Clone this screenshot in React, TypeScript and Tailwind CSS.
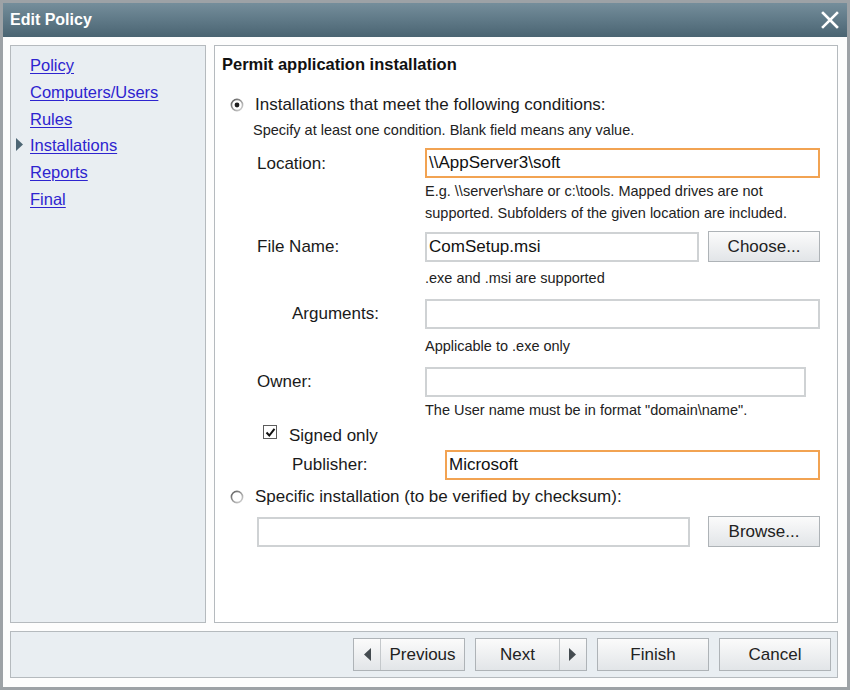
import React from "react";

const font = { fontFamily: '"Liberation Sans", Arial, sans-serif' };

function Radio({ checked }: { checked?: boolean }) {
  return (
    <svg width="14" height="14" viewBox="0 0 14 14" className="shrink-0">
      <defs>
        <linearGradient id={checked ? "rg1" : "rg2"} x1="0" y1="0" x2="1" y2="1">
          <stop offset="0" stopColor="#5a5a5a" />
          <stop offset="1" stopColor="#d8d8d8" />
        </linearGradient>
      </defs>
      <circle cx="7" cy="7" r="5.6" fill="#fff" stroke={`url(#${checked ? "rg1" : "rg2"})`} strokeWidth="1.6" />
      {checked && <circle cx="7" cy="7" r="2.4" fill="#1e1e1e" />}
    </svg>
  );
}

function Input({ value, orange, className }: { value?: string; orange?: boolean; className: string }) {
  return (
    <div
      className={`h-[30px] border-2 bg-white px-[2px] flex items-center text-[17px] text-[#111] ${
        orange ? "border-[#f2a352]" : "border-[#cfd2d4]"
      } ${className}`}
    >
      {value}
    </div>
  );
}

function Btn({ children, className }: { children: React.ReactNode; className?: string }) {
  return (
    <div
      className={`h-[31px] w-[112px] flex items-center justify-center border border-[#aeb3b7] bg-gradient-to-b from-[#fbfbfb] to-[#e2e5e8] text-[17px] text-[#222] ${className ?? ""}`}
    >
      {children}
    </div>
  );
}

const navItems = ["Policy", "Computers/Users", "Rules", "Installations", "Reports", "Final"];

export default function App() {
  return (
    <div style={font} className="w-[850px] h-[690px] border-[3px] border-[#9da2a6] flex flex-col bg-white">
      {/* title bar */}
      <div className="h-[34px] shrink-0 flex items-center justify-between pl-[7px] pr-[8px] bg-gradient-to-b from-[#758e9b] via-[#5f7987] to-[#4a6472]">
        <span className="text-white font-bold text-[16px]">Edit Policy</span>
        <svg width="18" height="18" viewBox="0 0 18 18">
          <path d="M2 2 L16 16 M16 2 L2 16" stroke="#fff" strokeWidth="2.6" strokeLinecap="square" />
        </svg>
      </div>

      <div className="flex-1 flex flex-col pl-[7px] pr-[9px] pt-[8px] pb-[9px] gap-[8px] bg-[#fdfdfd]">
        <div className="flex gap-[8px] h-[578px]">
          {/* left nav */}
          <div className="w-[196px] border border-[#b5babe] bg-[#e9eef2] pt-[6px]">
            {navItems.map((item) => (
              <div key={item} className="h-[26.8px] flex items-center relative pl-[19px]">
                {item === "Installations" && (
                  <svg width="8" height="13" viewBox="0 0 8 13" className="absolute left-[5px] top-[6px]">
                    <path d="M0 0 L7 6.5 L0 13 Z" fill="#4d6674" />
                  </svg>
                )}
                <span className="text-[16.5px] text-[#2e24cf] underline underline-offset-2">{item}</span>
              </div>
            ))}
          </div>

          {/* right content */}
          <div className="flex-1 border border-[#b5babe] bg-white pl-[7px] flex flex-col">
            <div className="mt-[8px] h-[20px] leading-[20px] font-bold text-[16.5px] text-[#111]">
              Permit application installation
            </div>

            <div className="mt-[20px] h-[22px] flex items-center text-[17px] text-[#1a1a1a]">
              <div className="ml-[8px] w-[25px]">
                <Radio checked />
              </div>
              Installations that meet the following conditions:
            </div>

            <div className="mt-[5px] h-[18px] leading-[18px] ml-[31px] text-[14.5px] text-[#222]">
              Specify at least one condition. Blank field means any value.
            </div>

            <div className="mt-[9px] flex items-center ml-[35px]">
              <div className="w-[168px] text-[17px] text-[#1a1a1a] pt-[2px]">Location:</div>
              <Input value="\\AppServer3\soft" orange className="w-[395px]" />
            </div>
            <div className="mt-[2px] ml-[203px] text-[14.5px] leading-[22px] text-[#222]">
              E.g. \\server\share or c:\tools. Mapped drives are not
              <br />
              supported. Subfolders of the given location are included.
            </div>

            <div className="mt-[7px] flex items-center ml-[35px]">
              <div className="w-[168px] text-[17px] text-[#1a1a1a]">File Name:</div>
              <Input value="ComSetup.msi" className="w-[274px]" />
              <Btn className="ml-[9px]">Choose...</Btn>
            </div>
            <div className="mt-[7px] h-[18px] leading-[18px] ml-[203px] text-[14.5px] text-[#222]">
              .exe and .msi are supported
            </div>

            <div className="mt-[12px] flex items-center ml-[70px]">
              <div className="w-[133px] text-[17px] text-[#1a1a1a]">Arguments:</div>
              <Input className="w-[395px]" />
            </div>
            <div className="mt-[8px] h-[18px] leading-[18px] ml-[203px] text-[14.5px] text-[#222]">
              Applicable to .exe only
            </div>

            <div className="mt-[12px] flex items-center ml-[35px]">
              <div className="w-[168px] text-[17px] text-[#1a1a1a]">Owner:</div>
              <Input className="w-[381px]" />
            </div>
            <div className="mt-[4px] h-[18px] leading-[18px] ml-[203px] text-[14.5px] text-[#222]">
              The User name must be in format "domain\name".
            </div>

            <div className="mt-[6px] h-[20px] flex items-center ml-[41px] text-[17px] text-[#1a1a1a]">
              <div className="w-[14px] h-[14px] border border-[#5c5c5c] bg-white flex items-center justify-center mr-[12px] -mt-[6px]">
                <svg width="11" height="11" viewBox="0 0 11 11">
                  <path d="M1.5 5.5 L4.3 8.5 L9.5 1.8" stroke="#111" strokeWidth="2" fill="none" />
                </svg>
              </div>
              <span className="pt-[2px]">Signed only</span>
            </div>

            <div className="mt-[5px] flex items-center ml-[70px]">
              <div className="w-[153px] text-[17px] text-[#1a1a1a]">Publisher:</div>
              <Input value="Microsoft" orange className="w-[375px]" />
            </div>

            <div className="mt-[6px] h-[22px] flex items-center text-[17px] text-[#1a1a1a]">
              <div className="ml-[8px] w-[25px]">
                <Radio />
              </div>
              Specific installation (to be verified by checksum):
            </div>

            <div className="mt-[8px] flex items-center ml-[35px]">
              <Input className="w-[433px]" />
              <Btn className="ml-[18px]">Browse...</Btn>
            </div>
          </div>
        </div>

        {/* bottom bar */}
        <div className="h-[47px] border border-[#b5babe] bg-[#e9eef2] flex items-center justify-end pr-[6px] gap-[10px]">
          <div className="h-[33px] w-[112px] flex border border-[#aeb3b7] bg-gradient-to-b from-[#fbfbfb] to-[#e2e5e8] text-[17px] text-[#222]">
            <div className="w-[27px] flex items-center justify-center border-r border-[#c4c8cb]">
              <svg width="8" height="13" viewBox="0 0 8 13">
                <path d="M8 0 L1 6.5 L8 13 Z" fill="#444b50" />
              </svg>
            </div>
            <div className="flex-1 flex items-center justify-center">Previous</div>
          </div>
          <div className="h-[33px] w-[112px] flex border border-[#aeb3b7] bg-gradient-to-b from-[#fbfbfb] to-[#e2e5e8] text-[17px] text-[#222]">
            <div className="flex-1 flex items-center justify-center">Next</div>
            <div className="w-[27px] flex items-center justify-center border-l border-[#c4c8cb]">
              <svg width="8" height="13" viewBox="0 0 8 13">
                <path d="M0 0 L7 6.5 L0 13 Z" fill="#444b50" />
              </svg>
            </div>
          </div>
          <Btn className="h-[33px]">Finish</Btn>
          <Btn className="h-[33px]">Cancel</Btn>
        </div>
      </div>
    </div>
  );
}
